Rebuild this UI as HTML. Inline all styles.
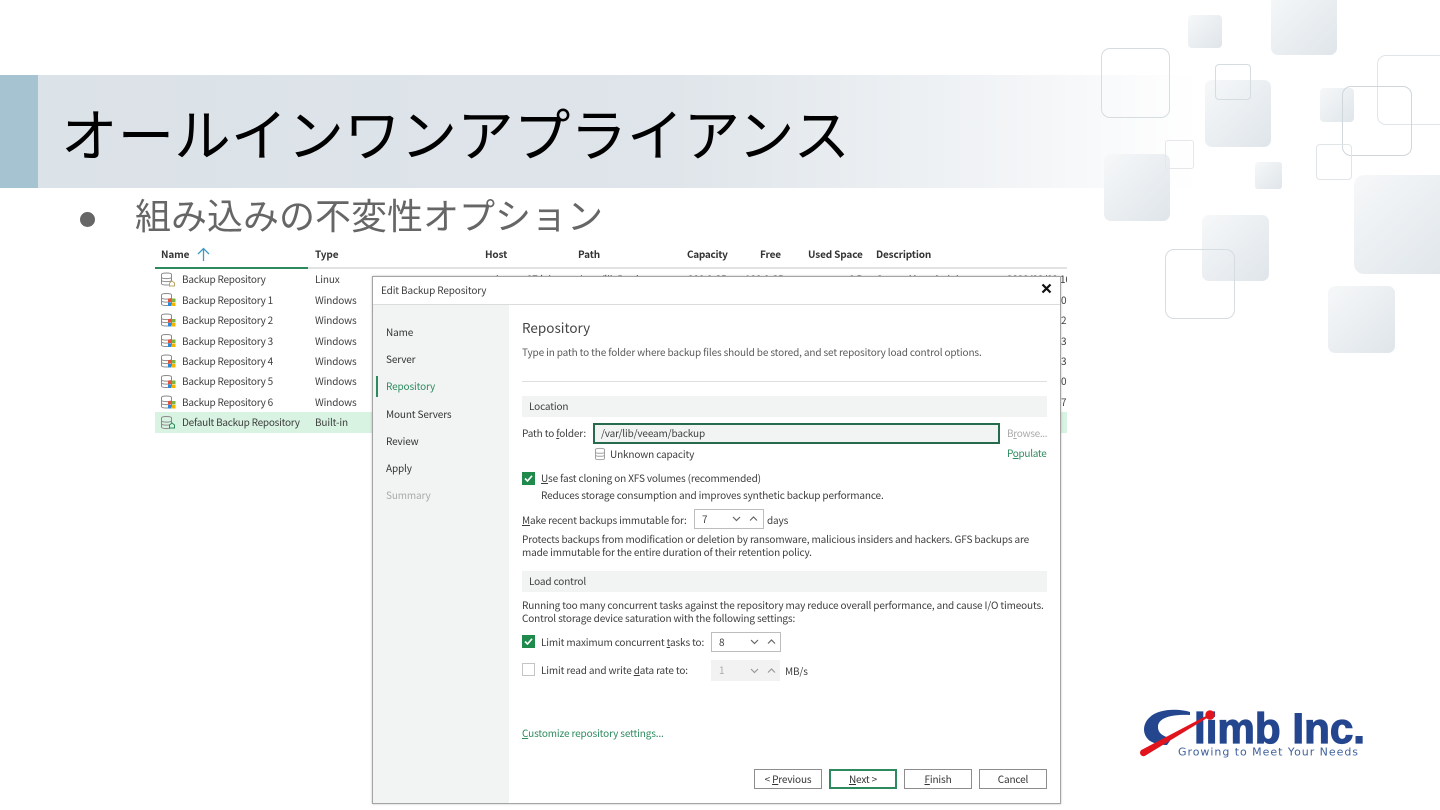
<!DOCTYPE html>
<html lang="ja"><head><meta charset="utf-8"><title>オールインワンアプライアンス</title>
<style>
html,body{margin:0;padding:0;background:#fff}
#p{position:relative;width:1440px;height:810px;overflow:hidden;background:#fff;font-family:"Noto Sans CJK JP","Liberation Sans",sans-serif}
#p div,#p span.a,#p svg{position:absolute}
.t{position:absolute;white-space:nowrap;font-size:10px;letter-spacing:-.14px;line-height:14px;color:#3d3d3d;font-family:"Noto Sans CJK JP","Liberation Sans",sans-serif;filter:blur(.25px)}
.r{letter-spacing:-.24px}
.b{font-weight:700;color:#333}
.s{border-radius:7px;background:linear-gradient(135deg,#f6f8f9,#dfe5ea)}
.o{border:1.5px solid #d5dde1;border-radius:9px;box-sizing:border-box}
.btn{border:1px solid #8d8d8d;box-sizing:border-box;background:#fff;height:20px;top:769px;width:68px;text-align:center;font-size:10px;letter-spacing:-.14px;line-height:18px;color:#333}
u{text-underline-offset:1px}
</style></head><body><div id="p">

<div style="left:38px;top:75px;width:1160px;height:113px;background:linear-gradient(90deg,#dbe2e8 0%,#dfe5ea 55%,#f3f5f7 85%,#fff 100%)"></div>
<div style="left:0;top:75px;width:38px;height:113px;background:#a5c3d0"></div>

<div class="s" style="left:1188px;top:15px;width:34px;height:33px;border-radius:4px"></div>
<div class="s" style="left:1271px;top:-10px;width:66px;height:65px"></div>
<div class="s" style="left:1205px;top:80px;width:66px;height:67px"></div>
<div class="s" style="left:1320px;top:88px;width:34px;height:34px;border-radius:4px"></div>
<div class="s" style="left:1255px;top:162px;width:27px;height:27px;border-radius:3px"></div>
<div class="s" style="left:1104px;top:154px;width:66px;height:67px"></div>
<div class="s" style="left:1354px;top:175px;width:100px;height:99px;border-radius:10px"></div>
<div class="s" style="left:1202px;top:215px;width:67px;height:66px"></div>
<div class="s" style="left:1328px;top:286px;width:67px;height:67px"></div>
<div class="o" style="left:1101px;top:48px;width:69px;height:70px"></div>
<div class="o" style="left:1215px;top:64px;width:36px;height:36px;border-radius:4px;border-width:1px"></div>
<div class="o" style="left:1377px;top:55px;width:80px;height:70px;border-color:#dfe5e8"></div>
<div class="o" style="left:1342px;top:86px;width:70px;height:70px;border-color:#cfd7db"></div>
<div class="o" style="left:1165px;top:140px;width:29px;height:29px;border-radius:3px;border-width:1px;border-color:#e4e8ea"></div>
<div class="o" style="left:1316px;top:144px;width:36px;height:36px;border-radius:4px;border-width:1px;border-color:#e0e5e7"></div>
<div class="o" style="left:1165px;top:249px;width:70px;height:70px"></div>

<span class="t" style="left:61px;top:91px;letter-spacing:0;font-size:56.6px;line-height:82px;color:#000;font-weight:400">オールインワンアプライアンス</span>
<div style="left:80px;top:212px;width:15px;height:15px;border-radius:50%;background:#666"></div>
<span class="t" style="left:135px;top:187px;letter-spacing:0;font-size:36px;line-height:54px;color:#666;font-weight:400">組み込みの不変性オプション</span>

<span class="t b" style="left:161px;top:247px">Name</span>
<svg style="left:197px;top:247px" width="13" height="15" viewBox="0 0 13 15"><path d="M1 7 6.500 1.500 12 7M6.500 2V14" fill="none" stroke="#3f9bc4" stroke-width="1.300"/></svg>
<span class="t b" style="left:315px;top:247px">Type</span>
<span class="t b" style="left:485px;top:247px">Host</span>
<span class="t b" style="left:578px;top:247px">Path</span>
<span class="t b" style="left:687px;top:247px;letter-spacing:-.3px">Capacity</span>
<span class="t b" style="left:760px;top:247px">Free</span>
<span class="t b" style="left:808px;top:247px">Used Space</span>
<span class="t b" style="left:876px;top:247px">Description</span>
<div style="left:155px;top:267px;width:912px;height:2px;background:#e2e2e2"></div>
<div style="left:155px;top:267px;width:153px;height:2px;background:#2d8a5e"></div>
<div style="left:155px;top:412px;width:912px;height:21px;background:#d8f3e1"></div>

<svg style="left:160px;top:271px" width="18" height="160" viewBox="0 0 18 160" fill="none">
<g stroke="#8a8a8a" stroke-width="1"><path d="M1.500 3.500c0-2 10-2 10 0v9c0 2-10 2-10 0zM1.500 6.500c1 1.500 9 1.500 10 0M1.500 9.500c1 1.500 9 1.500 10 0"/>
<path transform="translate(0,20.500)" d="M1.500 3.500c0-2 10-2 10 0v9c0 2-10 2-10 0zM1.500 6.500c1 1.500 9 1.500 10 0M1.500 9.500c1 1.500 9 1.500 10 0"/>
<path transform="translate(0,41)" d="M1.500 3.500c0-2 10-2 10 0v9c0 2-10 2-10 0zM1.500 6.500c1 1.500 9 1.500 10 0M1.500 9.500c1 1.500 9 1.500 10 0"/>
<path transform="translate(0,61.500)" d="M1.500 3.500c0-2 10-2 10 0v9c0 2-10 2-10 0zM1.500 6.500c1 1.500 9 1.500 10 0M1.500 9.500c1 1.500 9 1.500 10 0"/>
<path transform="translate(0,82)" d="M1.500 3.500c0-2 10-2 10 0v9c0 2-10 2-10 0zM1.500 6.500c1 1.500 9 1.500 10 0M1.500 9.500c1 1.500 9 1.500 10 0"/>
<path transform="translate(0,102.500)" d="M1.500 3.500c0-2 10-2 10 0v9c0 2-10 2-10 0zM1.500 6.500c1 1.500 9 1.500 10 0M1.500 9.500c1 1.500 9 1.500 10 0"/>
<path transform="translate(0,123)" d="M1.500 3.500c0-2 10-2 10 0v9c0 2-10 2-10 0zM1.500 6.500c1 1.500 9 1.500 10 0M1.500 9.500c1 1.500 9 1.500 10 0"/>
<path transform="translate(0,143.500)" d="M1.500 3.500c0-2 10-2 10 0v9c0 2-10 2-10 0zM1.500 6.500c1 1.500 9 1.500 10 0M1.500 9.500c1 1.500 9 1.500 10 0"/></g>
<path d="M9.500 15v-3l2.500-2 2.500 2v3z" stroke="#b9a56a" fill="#fff"/>
<path d="M9.500 157v-3l2.500-2 2.500 2v3z" stroke="#2d8a5e" fill="#d8f3e1"/>
<g id="w"><rect x="8" y="27.500" width="3.500" height="3.500" fill="#e0533d"/><rect x="12" y="27.500" width="3.500" height="3.500" fill="#7cb342"/><rect x="8" y="31.500" width="3.500" height="3.500" fill="#2b88d8"/><rect x="12" y="31.500" width="3.500" height="3.500" fill="#f4b400"/></g>
<use href="#w" y="20.500"/><use href="#w" y="41"/><use href="#w" y="61.500"/><use href="#w" y="82"/><use href="#w" y="102.500"/>
</svg>

<span class="t r" style="left:182px;top:272px">Backup Repository</span><span class="t" style="left:315px;top:272px">Linux</span>
<span class="t r" style="left:182px;top:293px">Backup Repository 1</span><span class="t" style="left:315px;top:293px">Windows</span>
<span class="t r" style="left:182px;top:313px">Backup Repository 2</span><span class="t" style="left:315px;top:313px">Windows</span>
<span class="t r" style="left:182px;top:334px">Backup Repository 3</span><span class="t" style="left:315px;top:334px">Windows</span>
<span class="t r" style="left:182px;top:354px">Backup Repository 4</span><span class="t" style="left:315px;top:354px">Windows</span>
<span class="t r" style="left:182px;top:374px">Backup Repository 5</span><span class="t" style="left:315px;top:374px">Windows</span>
<span class="t r" style="left:182px;top:395px">Backup Repository 6</span><span class="t" style="left:315px;top:395px">Windows</span>
<span class="t r" style="left:182px;top:415px">Default Backup Repository</span><span class="t" style="left:315px;top:415px">Built-in</span>

<span class="t" style="left:490px;top:272px">ubuntu-07.lab</span>
<span class="t" style="left:578px;top:272px">/mnt/lib/backups</span>
<span class="t" style="left:688px;top:272px">200.0 GB</span>
<span class="t" style="left:745px;top:272px">180.0 GB</span>
<span class="t" style="left:849px;top:272px">0 B</span>
<span class="t" style="left:876px;top:272px">Created by administrator</span>
<span class="t" style="left:1007px;top:272px">2023/03/09</span>
<span class="t" style="left:1060px;top:272px;width:7px;overflow:hidden">16</span>
<span class="t" style="left:1061px;top:293px">0</span>
<span class="t" style="left:1061px;top:313px">2</span>
<span class="t" style="left:1061px;top:334px">3</span>
<span class="t" style="left:1061px;top:354px">3</span>
<span class="t" style="left:1061px;top:374px">0</span>
<span class="t" style="left:1061px;top:395px">7</span>

<div style="left:372px;top:276px;width:689px;height:528px;background:#fff;border:1px solid #a4a4a4;box-sizing:border-box;box-shadow:0 0 2px rgba(0,0,0,.25)"></div>
<div style="left:373px;top:305px;width:136px;height:498px;background:#f2f4f4"></div>
<div style="left:373px;top:304px;width:687px;height:1px;background:#dcdcdc"></div>
<span class="t" style="left:381px;top:283px">Edit Backup Repository</span>
<svg style="left:1041px;top:283px" width="11" height="11" viewBox="0 0 11 11"><path d="M1.500 1.500 9.500 9.500M9.500 1.500 1.500 9.500" stroke="#111" stroke-width="2.200"/></svg>

<span class="t" style="left:386px;top:325px;color:#333">Name</span>
<span class="t" style="left:386px;top:352px;color:#333">Server</span>
<div style="left:376px;top:376px;width:2px;height:21px;background:#2d8a5e"></div>
<span class="t" style="left:386px;top:379px;color:#2d8a5e">Repository</span>
<span class="t" style="left:386px;top:407px;color:#333">Mount Servers</span>
<span class="t" style="left:386px;top:434px;color:#333">Review</span>
<span class="t" style="left:386px;top:461px;color:#333">Apply</span>
<span class="t" style="left:386px;top:488px;color:#aaa">Summary</span>

<span class="t" style="left:522px;top:317px;letter-spacing:0;font-size:13.5px;line-height:20px;color:#444">Repository</span>
<span class="t" style="left:522px;top:345px;color:#5a5a5a">Type in path to the folder where backup files should be stored, and set repository load control options.</span>
<div style="left:522px;top:381px;width:525px;height:1px;background:#dedede"></div>

<div style="left:522px;top:396px;width:525px;height:21px;background:#f2f4f4"></div>
<span class="t" style="left:529px;top:399px">Location</span>
<span class="t" style="left:522px;top:426px">Path to <u>f</u>older:</span>
<div style="left:593px;top:423px;width:407px;height:21px;background:#f2f4f4;border:2px solid #256b4c;box-sizing:border-box"></div>
<span class="t" style="left:601px;top:426px">/var/lib/veeam/backup</span>
<span class="t" style="left:1007px;top:426px;color:#aaa;letter-spacing:-.3px">B<u>r</u>owse...</span>
<span class="t" style="left:1007px;top:446px;color:#2d8a5e;letter-spacing:-.3px">P<u>o</u>pulate</span>
<svg style="left:594px;top:447px" width="12" height="14" viewBox="0 0 12 14" fill="none"><path d="M1.500 2.500c0-1.500 9-1.500 9 0v9c0 1.500-9 1.500-9 0zM1.500 5.500c1 1 8 1 9 0M1.500 8.500c1 1 8 1 9 0" stroke="#a0a0a0"/></svg>
<span class="t" style="left:610px;top:447px">Unknown capacity</span>

<div style="left:522px;top:472px;width:13px;height:13px;background:#1f8a4c"></div>
<svg style="left:522px;top:472px" width="13" height="13" viewBox="0 0 13 13"><path d="M3 6.500 5.500 9 10 3.800" fill="none" stroke="#fff" stroke-width="1.600"/></svg>
<span class="t" style="left:541px;top:471px"><u>U</u>se fast cloning on XFS volumes (recommended)</span>
<span class="t" style="left:541px;top:488px">Reduces storage consumption and improves synthetic backup performance.</span>

<span class="t" style="left:522px;top:513px"><u>M</u>ake recent backups immutable for:</span>
<div style="left:694px;top:509px;width:70px;height:20px;border:1px solid #bdbdbd;box-sizing:border-box"></div>
<span class="t" style="left:702px;top:512px">7</span>
<svg style="left:730px;top:514px" width="30" height="10" viewBox="0 0 30 10"><path d="M3 3 6.500 6.500 10 3M20 6.500 23.500 3 27 6.500" fill="none" stroke="#666" stroke-width="1.200"/></svg>
<span class="t" style="left:767px;top:513px">days</span>
<span class="t" style="left:522px;top:532px">Protects backups from modification or deletion by ransomware, malicious insiders and hackers. GFS backups are</span>
<span class="t" style="left:522px;top:545px">made immutable for the entire duration of their retention policy.</span>

<div style="left:522px;top:571px;width:525px;height:21px;background:#f2f4f4"></div>
<span class="t" style="left:529px;top:574px">Load control</span>
<span class="t" style="left:522px;top:598px">Running too many concurrent tasks against the repository may reduce overall performance, and cause I/O timeouts.</span>
<span class="t" style="left:522px;top:611px">Control storage device saturation with the following settings:</span>

<div style="left:522px;top:635px;width:13px;height:13px;background:#1f8a4c"></div>
<svg style="left:522px;top:635px" width="13" height="13" viewBox="0 0 13 13"><path d="M3 6.500 5.500 9 10 3.800" fill="none" stroke="#fff" stroke-width="1.600"/></svg>
<span class="t" style="left:541px;top:635px">Limit maximum concurrent <u>t</u>asks to:</span>
<div style="left:711px;top:632px;width:70px;height:20px;border:1px solid #bdbdbd;box-sizing:border-box"></div>
<span class="t" style="left:719px;top:635px">8</span>
<svg style="left:748px;top:637px" width="30" height="10" viewBox="0 0 30 10"><path d="M3 3 6.500 6.500 10 3M20 6.500 23.500 3 27 6.500" fill="none" stroke="#666" stroke-width="1.200"/></svg>

<div style="left:522px;top:663px;width:13px;height:13px;border:1px solid #c4c4c4;box-sizing:border-box"></div>
<span class="t" style="left:541px;top:663px">Limit read and write <u>d</u>ata rate to:</span>
<div style="left:711px;top:660px;width:69px;height:21px;background:#f2f2f2"></div>
<span class="t" style="left:719px;top:663px;color:#aaa">1</span>
<svg style="left:748px;top:666px" width="30" height="10" viewBox="0 0 30 10"><path d="M3 3 6.500 6.500 10 3M20 6.500 23.500 3 27 6.500" fill="none" stroke="#999" stroke-width="1.200"/></svg>
<span class="t" style="left:785px;top:664px">MB/s</span>

<span class="t" style="left:522px;top:726px;color:#2d8a5e"><u>C</u>ustomize repository settings...</span>

<div class="btn" style="left:754px"><span>&lt; <u>P</u>revious</span></div>
<div class="btn" style="left:829px;border:2px solid #2d8a5e;line-height:16px"><span><u>N</u>ext &gt;</span></div>
<div class="btn" style="left:904px"><span><u>F</u>inish</span></div>
<div class="btn" style="left:979px"><span>Cancel</span></div>

<svg style="left:1138px;top:705px" width="232" height="58" viewBox="0 0 232 58">
<path d="M52 7C40 3 20 4 12 12 4 19 4 30 12 36 17 39 23 40 29 40L34 33C25 32 20 28 20 22 20 14 30 9 52 10Z" fill="#24468f"/>
<text x="56" y="38" font-family="Liberation Sans,sans-serif" font-size="43" font-weight="700" fill="#24468f" stroke="#24468f" stroke-width="1.200" textLength="171" lengthAdjust="spacingAndGlyphs">limb Inc.</text>
<path d="M3.300 45 71.500 9.100 72.500 10.900 6.700 51A3.500 3.500 0 0 1 3.300 45Z" fill="#e1141e"/><circle cx="72" cy="10" r="4.700" fill="#e1141e"/>
<text x="40" y="50.500" font-family="DejaVu Sans,sans-serif" font-size="11" fill="#3e5f9c" textLength="180" lengthAdjust="spacing">Growing to Meet Your Needs</text>
</svg>
</div></body></html>
